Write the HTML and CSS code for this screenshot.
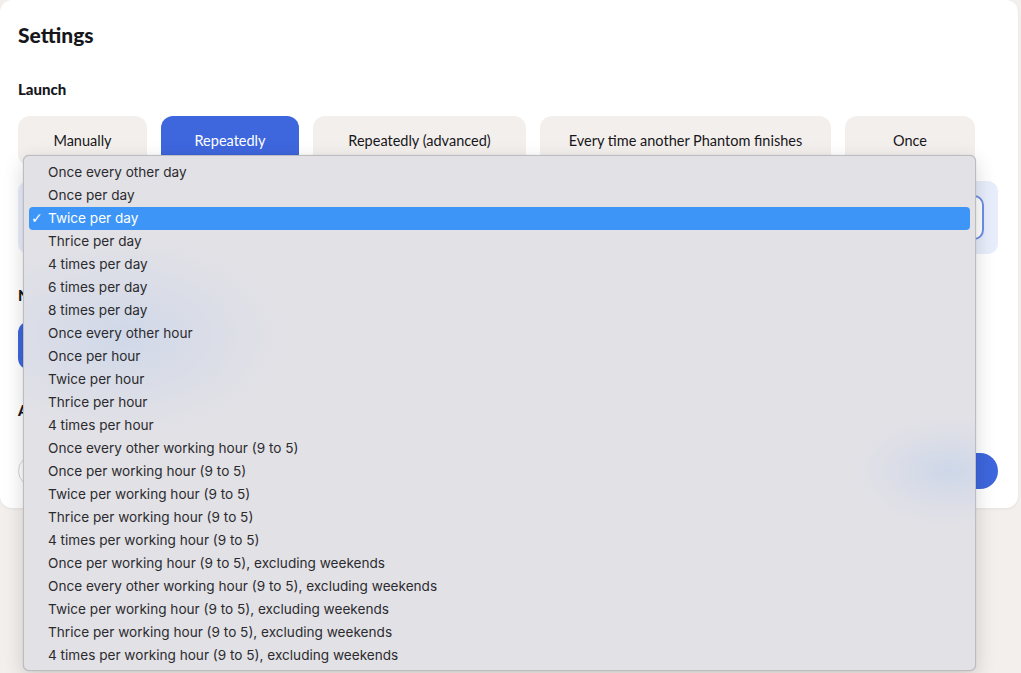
FILE: index.html
```html
<!DOCTYPE html>
<html lang="en">
<head>
<meta charset="utf-8">
<title>Settings</title>
<link rel="stylesheet" href="styles.css">
</head>
<body>
<div class="card">
  <h1 class="title">Settings</h1>
  <h2 class="section">Launch</h2>
  <div class="launch-row">
    <button class="opt w1">Manually</button>
    <button class="opt w2 active">Repeatedly</button>
    <button class="opt w3">Repeatedly (advanced)</button>
    <button class="opt w4">Every time another Phantom finishes</button>
    <button class="opt w5">Once</button>
  </div>
  <div class="freq-box">
    <div class="freq-select"></div>
  </div>
  <h2 class="section s2">N</h2>
  <div class="blue-btn"></div>
  <h2 class="section s3">A</h2>
  <div class="input-row">
    <div class="pill-input"></div>
    <div class="round-btn"></div>
  </div>
</div>

<div class="menu">
  <div class="glow g1"></div>
  <div class="glow g2"></div>
  <div class="item">Once every other day</div>
  <div class="item">Once per day</div>
  <div class="item selected"><span class="check">✓</span>Twice per day</div>
  <div class="item">Thrice per day</div>
  <div class="item">4 times per day</div>
  <div class="item">6 times per day</div>
  <div class="item">8 times per day</div>
  <div class="item">Once every other hour</div>
  <div class="item">Once per hour</div>
  <div class="item">Twice per hour</div>
  <div class="item">Thrice per hour</div>
  <div class="item">4 times per hour</div>
  <div class="item">Once every other working hour (9 to 5)</div>
  <div class="item">Once per working hour (9 to 5)</div>
  <div class="item">Twice per working hour (9 to 5)</div>
  <div class="item">Thrice per working hour (9 to 5)</div>
  <div class="item">4 times per working hour (9 to 5)</div>
  <div class="item">Once per working hour (9 to 5), excluding weekends</div>
  <div class="item">Once every other working hour (9 to 5), excluding weekends</div>
  <div class="item">Twice per working hour (9 to 5), excluding weekends</div>
  <div class="item">Thrice per working hour (9 to 5), excluding weekends</div>
  <div class="item">4 times per working hour (9 to 5), excluding weekends</div>
</div>
</body>
</html>
```

FILE: styles.css
```css
* { box-sizing: border-box; }
html, body { margin: 0; padding: 0; }
body {
  background: #f3efec;
  font-family: Lato, "Noto Sans", sans-serif;
  color: #1b1b1f;
  width: 1021px;
  height: 673px;
  overflow: hidden;
  position: relative;
}
.card {
  width: 1018px;
  height: 508px;
  background: #ffffff;
  border-radius: 12px;
  box-shadow: 0 1px 3px rgba(0,0,0,0.06);
  padding: 22px 20px 0 18px;
  display: flex;
  flex-direction: column;
}
.title {
  margin: 0;
  font-size: 21px;
  line-height: 26px;
  font-weight: 900;
  color: #17171b;
}
.section {
  margin: 0;
  font-size: 15px;
  line-height: 20px;
  font-weight: 900;
  color: #17171b;
}
.title + .section { margin-top: 31px; }
.launch-row {
  margin-top: 17px;
  display: flex;
  gap: 14px;
}
.opt {
  height: 50px;
  border: none;
  border-radius: 12px;
  background: #f3efec;
  font-family: Lato, "Noto Sans", sans-serif;
  font-size: 14.5px;
  color: #17171b;
  padding: 0;
  display: flex;
  align-items: center;
  justify-content: center;
  line-height: 1;
}
.opt.w1 { width: 129px; }
.opt.w2 { width: 138px; }
.opt.w3 { width: 213px; }
.opt.w4 { width: 291px; }
.opt.w5 { width: 130px; }
.opt.active { background: #3e66dd; color: #ffffff; }
.freq-box {
  margin-top: 15px;
  height: 73px;
  background: #e8edfb;
  border-radius: 10px;
  padding: 14px 14px;
}
.freq-select {
  height: 45px;
  border: 2px solid #6f8fe6;
  border-radius: 10px;
  background: #ffffff;
}
.s2 { margin-top: 31px; }
.blue-btn {
  margin-top: 16px;
  width: 180px;
  height: 49px;
  border-radius: 12px;
  background: #3e66dd;
}
.s3 { margin-top: 30px; }
.input-row {
  margin-top: 33px;
  display: flex;
  gap: 14px;
  align-items: center;
}
.pill-input {
  flex: 1;
  height: 32px;
  border: 1px solid #d6d6d9;
  border-radius: 16px;
  background: #fff;
}
.round-btn {
  width: 120px;
  height: 36px;
  border-radius: 18px;
  background: #3e66dd;
}

/* native-looking dropdown */
.menu {
  position: absolute;
  left: 23px;
  top: 155px;
  width: 953px;
  height: 516px;
  background: #e2e1e6;
  border: 1px solid #bdbcc0;
  border-radius: 6px;
  box-shadow: 0 6px 20px rgba(0,0,0,0.16), 0 0 1px rgba(0,0,0,0.25);
  padding: 5px 5px 4px 5px;
  font-family: Inter, "Noto Sans", sans-serif;
  font-size: 13.6px;
  color: #2b2b2e;
  overflow: hidden;
}
.glow {
  position: absolute;
  pointer-events: none;
  border-radius: 50%;
}
.g1 {
  left: -60px;
  top: 80px;
  width: 320px;
  height: 200px;
  background: radial-gradient(ellipse at center, rgba(185,205,235,0.45) 0%, rgba(200,212,235,0.22) 45%, rgba(226,225,230,0) 72%);
}
.g2 {
  left: 830px;
  top: 260px;
  width: 190px;
  height: 110px;
  background: radial-gradient(ellipse at center, rgba(185,205,235,0.5) 0%, rgba(200,212,235,0.22) 45%, rgba(226,225,230,0) 72%);
}
.item {
  position: relative;
  height: 23px;
  line-height: 23px;
  padding-left: 19px;
  white-space: nowrap;
  border-radius: 4px;
}
.item.selected {
  background: #3d96f7;
  color: #ffffff;
}
.check {
  position: absolute;
  left: 2px;
  top: 0;
  font-size: 14px;
  font-family: "DejaVu Sans", sans-serif;
}
```
